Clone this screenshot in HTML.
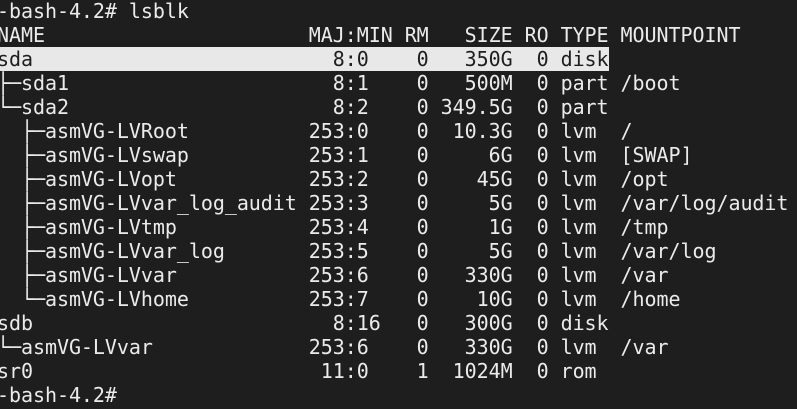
<!DOCTYPE html>
<html><head><meta charset="utf-8"><style>
html,body{margin:0;padding:0;background:#1e1e1e;width:797px;height:409px;overflow:hidden}
pre{position:absolute;left:-3px;top:-1px;margin:0;font-family:"DejaVu Sans Mono","Liberation Mono",monospace;font-size:20px;line-height:24px;letter-spacing:-0.05px;color:#ebebeb;white-space:pre}
.hl{position:absolute;left:0;top:47px;width:609px;height:24px;background:#e8e8e8}
.d{color:#1e1e1e}
</style></head><body>
<div class="hl"></div>
<pre>-bash-4.2# lsblk
NAME                      MAJ:MIN RM   SIZE RO TYPE MOUNTPOINT
<span class="d">sda                         8:0    0   350G  0 disk</span>
├─sda1                      8:1    0   500M  0 part /boot
└─sda2                      8:2    0 349.5G  0 part
  ├─asmVG-LVRoot          253:0    0  10.3G  0 lvm  /
  ├─asmVG-LVswap          253:1    0     6G  0 lvm  [SWAP]
  ├─asmVG-LVopt           253:2    0    45G  0 lvm  /opt
  ├─asmVG-LVvar_log_audit 253:3    0     5G  0 lvm  /var/log/audit
  ├─asmVG-LVtmp           253:4    0     1G  0 lvm  /tmp
  ├─asmVG-LVvar_log       253:5    0     5G  0 lvm  /var/log
  ├─asmVG-LVvar           253:6    0   330G  0 lvm  /var
  └─asmVG-LVhome          253:7    0    10G  0 lvm  /home
sdb                         8:16   0   300G  0 disk
└─asmVG-LVvar             253:6    0   330G  0 lvm  /var
sr0                        11:0    1  1024M  0 rom
-bash-4.2# </pre>
</body></html>
